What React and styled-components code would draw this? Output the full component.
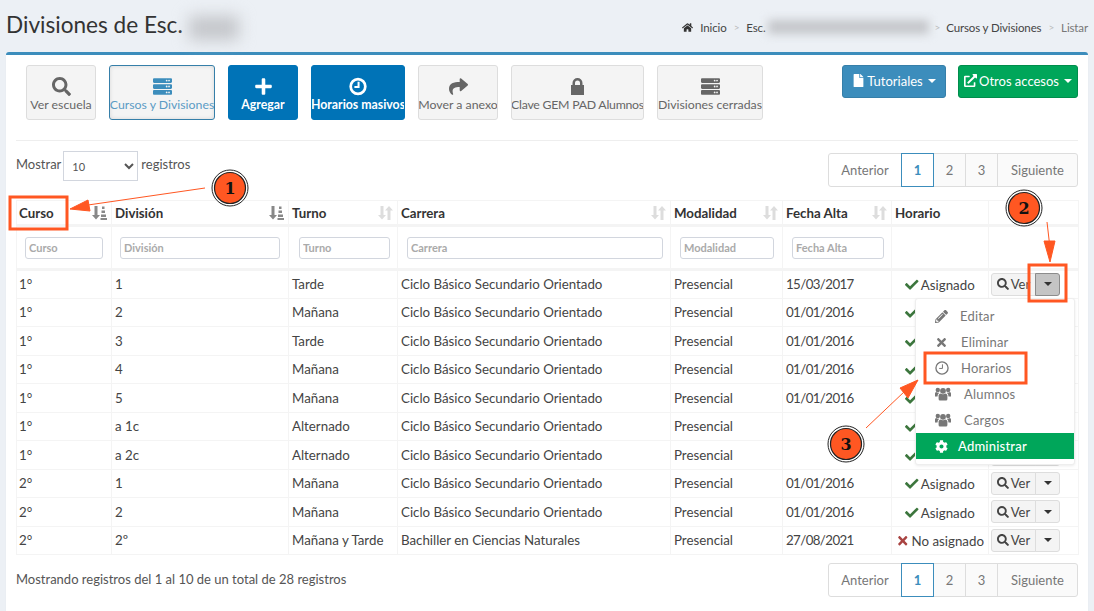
import React from 'react';
import styled, { createGlobalStyle } from 'styled-components';
import { FaSearch, FaServer, FaPlus, FaShare, FaFile, FaExternalLinkAlt, FaHome, FaCheck, FaTimes, FaPencilAlt, FaCog } from 'react-icons/fa';

const Global = createGlobalStyle`
  html, body { margin: 0; padding: 0; background: #ecf0f5; }
  body { font-family: "Lato", "Liberation Sans", sans-serif; font-size: 13.3px; color: #444; }
  * { box-sizing: border-box; }
`;
const Page = styled.div`position: relative; width: 1094px; height: 611px; overflow: hidden;`;
const Head = styled.header`display: flex; justify-content: space-between; height: 52px; padding: 0 6px;`;
const Title = styled.h1`margin: 9px 0 0; font-size: 22.6px; line-height: 32px; font-weight: 400; color: #333; display: flex;`;
const Blur = styled.span`
  display: inline-block; width: ${p => p.$w}px; height: ${p => p.$h}px; background: #c4c6ca; filter: blur(${p => p.$b}px);
  margin: ${p => p.$m};
`;
const Crumbs = styled.nav`display: flex; align-items: center; font-size: 11.5px; letter-spacing: -.13px; color: #444; height: 54px; svg { font-size: 11px; margin-right: 7px; color: #333; }`;
const Sep = styled.span`color: #bbb; margin: 0 ${p => p.$m || 7}px; font-size: 10px;`;
const Muted = styled.span`color: #777;`;
const Card = styled.main`margin: 0 6px; height: 559px; background: #fff; border-top: 3px solid #3c8dbc; border-radius: 3px 3px 0 0; padding: 10px 10px 0; box-shadow: 0 1px 1px rgba(0,0,0,.1);`;
const Tools = styled.div`display: flex; justify-content: space-between; height: 76px; border-bottom: 1px solid #eee;`;
const ToolGroup = styled.div`display: flex; gap: ${p => p.$gap}px; padding-left: 10px; align-items: flex-start;`;
const ToolBtn = styled.button`
  width: ${p => p.$w}px; height: 55px; padding: 0; border-radius: 3px; font: inherit; font-size: 12.3px; white-space: nowrap;
  letter-spacing: ${p => p.$tight ? '-.25px' : 'normal'};
  display: flex; flex-direction: column; align-items: center; justify-content: flex-start; overflow: hidden;
  border: 1px solid ${p => p.$primary ? '#0073b7' : p.$active ? '#367fa9' : '#ddd'};
  background: ${p => p.$primary ? '#0073b7' : '#f4f4f4'};
  color: ${p => p.$primary ? '#fff' : p.$active ? '#5b9bc4' : '#666'};
  font-weight: ${p => p.$primary ? 700 : 400};
  box-shadow: ${p => p.$active ? 'inset 0 0 4px rgba(0,0,0,.12)' : 'none'};
  svg { margin-top: 11px; margin-bottom: 1px; height: 19px; font-size: 19px; color: ${p => p.$primary ? '#fff' : p.$active ? '#3c8dbc' : '#666'}; flex: none; }
`;
const TopBtn = styled.button`
  width: ${p => p.$w}px; height: 33px; border-radius: 3px; font: inherit; font-size: 13px; color: #fff; padding: 0 0 2px;
  background: ${p => p.$bg}; border: 1px solid ${p => p.$bd}; display: flex; align-items: center; justify-content: center; gap: 2px; white-space: nowrap;
  svg { font-size: 13px; }
`;
const Caret = styled.i`display: inline-block; width: 0; height: 0; border-top: 4px solid ${p => p.$c || '#fff'}; border-left: 4px solid transparent; border-right: 4px solid transparent; margin-left: ${p => p.$flush ? 0 : 3}px;`;
const Controls = styled.div`display: flex; justify-content: space-between; height: 59px; padding-top: 10px;`;
const Show = styled.label`display: flex; gap: 1px; height: 30px; line-height: 27px; color: #555; font-size: 13px;`;
const Sel = styled.select`width: 75px; height: 30px; margin: 0 2px 0 1px; border: 1px solid #d2d6de; background: #fff; font: inherit; font-size: 11px; padding-left: 4px; color: #555;`;
const Pager = styled.ul`display: flex; list-style: none; margin: 2px 0 0; padding: 0; height: 34px;`;
const PageItem = styled.li`
  width: ${p => p.$w}px; display: flex; align-items: center; justify-content: center; font-size: 13px;
  border: 1px solid ${p => p.$on ? '#3c8dbc' : '#ddd'}; margin-left: -1px; position: relative; z-index: ${p => p.$on ? 1 : 0};
  background: ${p => p.$on ? '#fff' : '#fafafa'}; color: ${p => p.$on ? '#3c8dbc' : '#777'}; font-weight: ${p => p.$on ? 700 : 400};
  &:first-child { border-radius: 3px 0 0 3px; background: #fff; } &:last-child { border-radius: 0 3px 3px 0; }
`;
const Table = styled.table`width: 1062px; table-layout: fixed; border-collapse: collapse; font-size: 13.3px;`;
const Th = styled.th`height: 25px; border: 1px solid #f4f4f4; border-bottom: 3px solid #f4f4f4; padding: 0 3px; text-align: left; font-size: 13.3px; font-weight: 700; color: #333; &:first-child { padding-left: 2px; }`;
const ThIn = styled.div`display: flex; justify-content: space-between; align-items: center; padding-right: 1px;`;
const Fd = styled.td`height: 44px; border: 1px solid #f4f4f4; border-bottom: 3px solid #f4f4f4; padding: 0 ${p => p.$r}px 0 ${p => p.$l}px;`;
const Filter = styled.input`
  display: block; width: 100%; height: 22px; border: 1px solid #d2d6de; border-radius: 3px; padding: 0 3px; font: inherit; font-size: 11px; font-weight: 700;
  &::placeholder { color: #aaa; opacity: 1; }
`;
const Td = styled.td`
  height: 28.5px; border: 1px solid #f4f4f4; padding: 0 3px; color: #444; white-space: nowrap; text-align: ${p => p.$c ? 'center' : 'left'};
  letter-spacing: ${p => p.$date ? '-.6px' : 'normal'};
  &:first-child { padding-left: 2px; }
`;
const Status = styled.span`display: inline-flex; align-items: center; gap: 2px; vertical-align: middle; svg { color: ${p => p.$ok ? '#3c763d' : '#a94442'}; font-size: 13.500px; }`;
const ActionCell = styled.td`height: 28.5px; border: 1px solid #f4f4f4; padding: 0 0 0 2px; position: relative;`;
const BtnGroup = styled.div`display: flex; height: 23px; width: 69px;`;
const VerBtn = styled.button`flex: 1; padding: 0; border: 1px solid #ddd; border-radius: 3px 0 0 3px; background: #f4f4f4; font: inherit; font-size: 13px; color: #444; display: flex; align-items: center; justify-content: center; gap: 2px; svg { font-size: 12px; }`;
const CaretBtn = styled.button`
  width: 25px; margin-left: -1px; padding: 0; border-radius: 0 3px 3px 0; display: flex; align-items: center; justify-content: center;
  border: 1px solid ${p => p.$open ? '#8c8c8c' : '#ddd'}; background: ${p => p.$open ? '#c4c4c4' : '#f4f4f4'};
`;
const Menu = styled.div`
  position: absolute; top: 27px; right: 3px; z-index: 3; width: 160px; height: 167px; background: #fff; border: 1px solid #eee; border-radius: 3px; padding-top: 4px;
  box-shadow: 0 1px 3px rgba(0,0,0,.08);
`;
const MenuItem = styled.div`
  display: flex; align-items: center; height: 26px; padding-left: 19px; font-size: 13px; letter-spacing: .2px;
  color: ${p => p.$on ? '#fff' : '#777'}; background: ${p => p.$on ? '#00a65a' : 'transparent'}; font-weight: ${p => p.$on ? 500 : 400};
  svg { color: ${p => p.$on ? '#fff' : '#777'}; font-size: 13px; flex: none; }
  span { margin-left: ${p => p.$gap}px; }
`;
const Foot = styled.div`display: flex; justify-content: space-between; margin-top: 6px; span { line-height: 36px; color: #555; font-size: 13px; }`;
const Marks = styled.svg`position: absolute; inset: 0; z-index: 5; pointer-events: none;`;

const ClockIcon = ({ size = 14, w = 2 }) => (
  <svg width={size} height={size} viewBox="0 0 16 16" fill="none" stroke="currentColor">
    <circle cx="8" cy="8" r={8 - w / 2 - .3} strokeWidth={w} />
    <path d="M8.500 3.800V8.500H4.800" strokeWidth={w * .75} />
  </svg>
);
const LockIcon = () => (
  <svg width="15" height="19" viewBox="0 0 15 19" fill="currentColor">
    <path d="M1 8h1.500V6a5 5 0 0110 0v2H14v10H1zM5 8h5V6a2.500 2.500 0 00-5 0z" fillRule="evenodd" />
  </svg>
);
const UsersIcon = () => (
  <svg width="16" height="14" viewBox="0 0 16 14" fill="currentColor">
    <circle cx="8" cy="3.800" r="2.900" /><circle cx="2.800" cy="3" r="2.200" /><circle cx="13.200" cy="3" r="2.200" />
    <path d="M3.600 8.200Q4 6.800 5.200 6.400Q8 8 10.800 6.400Q12 6.800 12.400 8.200V12Q12.400 13.500 11 13.500H5Q3.600 13.500 3.600 12z" />
    <path d="M0 6.500Q0 5.500 1.200 5.100Q2.800 6 4 5.400Q4.200 6 3.800 6.200Q2.600 7 2.500 9.500H0zM16 6.500Q16 5.500 14.800 5.100Q13.200 6 12 5.400Q11.800 6 12.200 6.200Q13.400 7 13.500 9.500H16z" />
  </svg>
);
const SortIcon = ({ on }) => (
  <svg width="15" height="15" viewBox="0 0 15 15" fill={on ? '#888' : '#ddd'}>
    <path d="M2.500 1h3v9H8L4 14.500 0 10h2.500z" />
    {on
      ? <path d="M10 1.500h2.500v2.500H10zM9.500 5.500H13V8H9.500zM9 9.500h5V12H9zM8.500 13H15v2H8.500z" />
      : <path d="M12.500 15h-3V5.500H7L11 1l4 4.500h-2.500z" />}
  </svg>
);

const cols = [95, 177, 109, 273, 112, 109, 97, 90];
const heads = [['Curso', true], ['División', true], ['Turno'], ['Carrera'], ['Modalidad'], ['Fecha Alta'], ['Horario']];
const filters = [['Curso', 8, 8], ['División', 8, 8], ['Turno', 10, 7], ['Carrera', 9, 7], ['Modalidad', 9, 8], ['Fecha Alta', 9, 7]];
const M = 'Ciclo Básico Secundario Orientado';
const rows = [
  ['1°', '1', 'Tarde', M, '15/03/2017', 1], ['1°', '2', 'Mañana', M, '01/01/2016', 1], ['1°', '3', 'Tarde', M, '01/01/2016', 1],
  ['1°', '4', 'Mañana', M, '01/01/2016', 1], ['1°', '5', 'Mañana', M, '01/01/2016', 1], ['1°', 'a 1c', 'Alternado', M, '', 1],
  ['1°', 'a 2c', 'Alternado', M, '', 1], ['2°', '1', 'Mañana', M, '01/01/2016', 1], ['2°', '2', 'Mañana', M, '01/01/2016', 1],
  ['2°', '2º', 'Mañana y Tarde', 'Bachiller en Ciencias Naturales', '27/08/2021', 0],
];
const tools = [
  [<FaSearch />, 'Ver escuela', 70], [<FaServer />, 'Cursos y Divisiones', 106, 'a'], [<FaPlus />, 'Agregar', 70, 'p'], [<ClockIcon size={18} w={2.400} />, 'Horarios masivos', 94, 'p'],
  [<FaShare />, 'Mover a anexo', 80], [<LockIcon />, 'Clave GEM PAD Alumnos', 133, 't'], [<FaServer />, 'Divisiones cerradas', 106],
];
const Pagination = () => (
  <Pager>
    <PageItem $w={74}>Anterior</PageItem><PageItem $on $w={33}>1</PageItem><PageItem $w={33}>2</PageItem><PageItem $w={33}>3</PageItem><PageItem $w={81}>Siguiente</PageItem>
  </Pager>
);
const items = [
  [<FaPencilAlt />, 'Editar', 12], [<FaTimes />, 'Eliminar', 13], [<ClockIcon size={14} w={1.500} />, 'Horarios', 12],
  [<UsersIcon />, 'Alumnos', 13], [<UsersIcon />, 'Cargos', 13], [<FaCog />, 'Administrar', 10, true],
];
const O = '#ff5722';
const Badge = ({ x, y, n }) => (
  <g>
    <circle cx={x} cy={y} r="18" fill="#fff" stroke="#222" strokeWidth="1" />
    <circle cx={x} cy={y} r="15.500" fill={O} stroke="#222" strokeWidth="1.200" />
    <text x={x} y={y + 6} textAnchor="middle" fontFamily="'DejaVu Serif','Liberation Serif',serif" fontWeight="700" fontSize="16" fill="#111">{n}</text>
  </g>
);

export default function App() {
  return (
    <Page>
      <Global />
      <Head>
        <Title>Divisiones de Esc.<Blur $w={50} $h={24} $b={8} $m="7px 0 0 6px" /></Title>
        <Crumbs>
          <FaHome />Inicio<Sep>&gt;</Sep>Esc.<Blur $w={161} $h={14} $b={5} $m="0 0 0 2px" /><Sep $m={6}>&gt;</Sep>Cursos y Divisiones<Sep>&gt;</Sep><Muted>Listar</Muted>
        </Crumbs>
      </Head>
      <Card>
        <Tools>
          <ToolGroup $gap={13}>
            {tools.map(([icon, t, w, k]) => (
              <ToolBtn key={t} $w={w} $primary={k === 'p'} $active={k === 'a'} $tight={k === 't'}>{icon}{t}</ToolBtn>
            ))}
          </ToolGroup>
          <ToolGroup $gap={12}>
            <TopBtn $w={104} $bg="#3c8dbc" $bd="#367fa9"><FaFile />Tutoriales<Caret /></TopBtn>
            <TopBtn $w={120} $bg="#00a65a" $bd="#008d4c"><FaExternalLinkAlt />Otros accesos<Caret /></TopBtn>
          </ToolGroup>
        </Tools>
        <Controls>
          <Show>Mostrar <Sel defaultValue="10"><option>10</option><option>25</option></Sel> registros</Show>
          <Pagination />
        </Controls>
        <Table>
          <colgroup>{cols.map((w, i) => <col key={i} style={{ width: w }} />)}</colgroup>
          <thead>
            <tr>
              {heads.map(([h, on]) => <Th key={h}><ThIn>{h}{h !== 'Horario' && <SortIcon on={on} />}</ThIn></Th>)}
              <Th />
            </tr>
            <tr>
              {filters.map(([f, l, r]) => <Fd key={f} $l={l} $r={r}><Filter placeholder={f} readOnly /></Fd>)}
              <Fd $l={0} $r={0} /><Fd $l={0} $r={0} />
            </tr>
          </thead>
          <tbody>
            {rows.map((r, i) => (
              <tr key={i}>
                <Td>{r[0]}</Td><Td>{r[1]}</Td><Td>{r[2]}</Td><Td>{r[3]}</Td><Td>Presencial</Td><Td $date>{r[4]}</Td>
                <Td $c>{r[5] ? <Status $ok><FaCheck />Asignado</Status> : <Status><FaTimes />No asignado</Status>}</Td>
                <ActionCell>
                  <BtnGroup>
                    <VerBtn><FaSearch />Ver</VerBtn>
                    <CaretBtn $open={i === 0}><Caret $c="#333" $flush /></CaretBtn>
                  </BtnGroup>
                  {i === 0 && (
                    <Menu>
                      {items.map(([icon, t, g, on]) => <MenuItem key={t} $gap={g} $on={on}>{icon}<span>{t}</span></MenuItem>)}
                    </Menu>
                  )}
                </ActionCell>
              </tr>
            ))}
          </tbody>
        </Table>
        <Foot>
          <span>Mostrando registros del 1 al 10 de un total de 28 registros</span>
          <Pagination />
        </Foot>
      </Card>
      <Marks width="1094" height="611" viewBox="0 0 1094 611">
        <g fill="none" stroke={O} strokeWidth="3">
          <rect x="10" y="197" width="57" height="32" />
          <rect x="1029" y="265" width="37" height="36" />
          <rect x="925" y="353" width="101" height="30" />
        </g>
        <g fill={O} stroke={O}>
          <path d="M205 188L88 205" strokeWidth="1" /><path d="M70 209L88 200L90 211Z" />
          <path d="M1047 222L1050 248" strokeWidth="1" /><path d="M1050 262L1044 241L1055 241Z" />
          <path d="M866 428L905 391" strokeWidth="1" /><path d="M918 380L908 398L900 388Z" />
        </g>
        <Badge x={230} y={188} n="1" />
        <Badge x={1024} y={208} n="2" />
        <Badge x={846} y={444} n="3" />
      </Marks>
    </Page>
  );
}
